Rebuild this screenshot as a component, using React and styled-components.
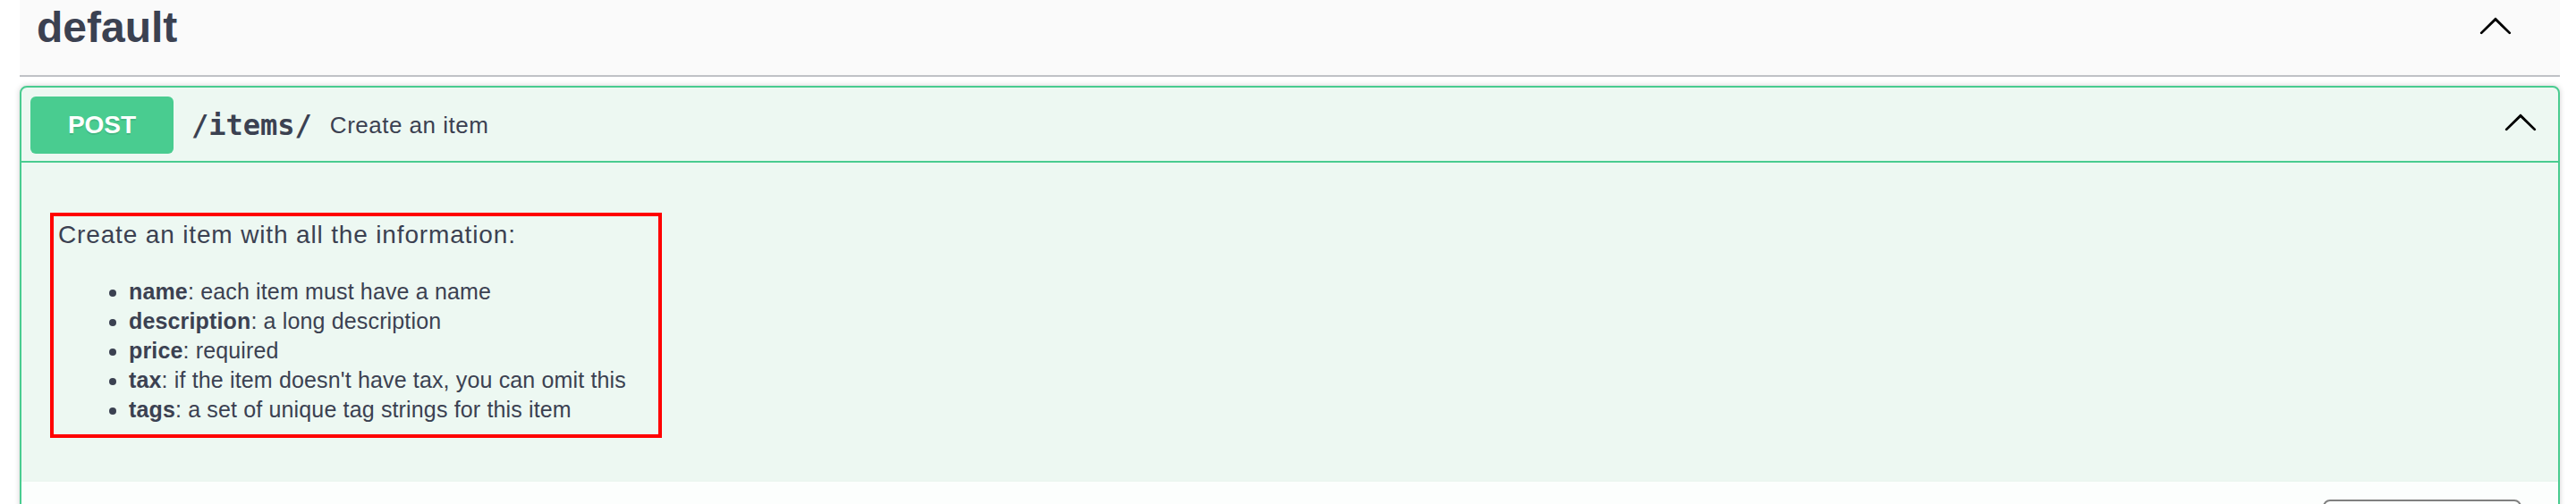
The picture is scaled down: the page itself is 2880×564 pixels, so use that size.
import React from "react";
import styled, { createGlobalStyle } from "styled-components";

const GlobalStyle = createGlobalStyle`
  html, body { margin: 0; padding: 0; background: #ffffff; }
  body { font-family: "Liberation Sans", Arial, sans-serif; color: #3b4151; }
  * { box-sizing: border-box; }
`;

const Page = styled.div`
  padding: 0 18px 0 22px;
`;

const TagHeading = styled.h3`
  display: flex;
  align-items: center;
  height: 86px;
  margin: 0 0 10px;
  padding: 0 52px 22px 19px;
  background: #fafafa;
  border-bottom: 2px solid rgba(59, 65, 81, 0.3);
  font-family: "Liberation Sans", Arial, sans-serif;
  font-size: 48px;
  font-weight: 700;
  line-height: 48px;
  color: #3b4151;
`;

const TagName = styled.span`
  flex: 1;
`;

const ArrowButton = styled.button`
  display: flex;
  align-items: center;
  justify-content: center;
  padding: 0;
  margin: ${(p) => p.$margin || "0"};
  border: none;
  background: transparent;
  cursor: pointer;
  svg { display: block; fill: #000; }
`;

const OpBlock = styled.div`
  border: 2px solid #49cc90;
  border-radius: 8px;
  background: #edf8f2;
  box-shadow: 0 0 6px rgba(0, 0, 0, 0.19);
  overflow: hidden;
  margin-bottom: 30px;
`;

const Summary = styled.div`
  display: flex;
  align-items: center;
  padding: 10px 10px 8px 10px;
  border-bottom: 2px solid #49cc90;
`;

const Method = styled.span`
  min-width: 160px;
  padding: 12px 0;
  border-radius: 6px;
  background: #49cc90;
  color: #fff;
  font-family: "Liberation Sans", Arial, sans-serif;
  font-size: 28px;
  font-weight: 700;
  line-height: 40px;
  text-align: center;
  text-shadow: 0 2px 0 rgba(0, 0, 0, 0.1);
`;

const Path = styled.span`
  padding: 0 20px;
  font-family: "DejaVu Sans Mono", "Liberation Mono", monospace;
  font-size: 32px;
  font-weight: 700;
  color: #3b4151;
`;

const SummaryDesc = styled.span`
  flex: 1;
  font-family: "Liberation Sans", Arial, sans-serif;
  font-size: 26px;
  letter-spacing: 0.5px;
  color: #3b4151;
`;

const Body = styled.div``;

const DescWrapper = styled.div`
  padding: 56px 40px 49px 32px;
`;

const Annotated = styled.div`
  width: 684px;
  border: 4px solid #ff0000;
  padding: 3px 6px 11px 5px;
`;

const Para = styled.p`
  margin: 0;
  font-size: 28px;
  line-height: 36px;
  letter-spacing: 0.85px;
  color: #3b4151;
`;

const List = styled.ul`
  margin: 29px 0 0;
  padding-left: 79px;
  list-style: disc;
`;

const Item = styled.li`
  font-size: 25px;
  line-height: 33px;
  letter-spacing: 0.15px;
  color: #3b4151;
  b { font-weight: 700; }
`;

const SectionHeader = styled.div`
  display: flex;
  align-items: flex-start;
  justify-content: flex-end;
  min-height: 100px;
  padding: 20px 41px 16px;
  background: rgba(255, 255, 255, 0.8);
  box-shadow: 0 2px 4px rgba(0, 0, 0, 0.1);
`;

const TryButton = styled.button`
  padding: 10px 50px;
  border: 2px solid #808080;
  border-radius: 8px;
  background: transparent;
  font-family: "Liberation Sans", Arial, sans-serif;
  font-size: 28px;
  font-weight: 700;
  line-height: 32px;
  color: #3b4151;
`;

const ArrowUp = () => (
  <svg width="40" height="40" viewBox="0 0 20 20" aria-hidden="true">
    <path d="M 17.418 14.908 C 17.69 15.176 18.127 15.176 18.397 14.908 C 18.667 14.64 18.668 14.207 18.397 13.939 L 10.489 6.109 C 10.219 5.841 9.782 5.841 9.51 6.109 L 1.602 13.939 C 1.332 14.207 1.332 14.64 1.602 14.908 C 1.873 15.176 2.311 15.176 2.581 14.908 L 10 7.767 L 17.418 14.908 Z" />
  </svg>
);

const fields = [
  ["name", "each item must have a name"],
  ["description", "a long description"],
  ["price", "required"],
  ["tax", "if the item doesn't have tax, you can omit this"],
  ["tags", "a set of unique tag strings for this item"],
];

export default function App() {
  return (
    <>
      <GlobalStyle />
      <Page>
        <TagHeading>
          <TagName>default</TagName>
          <ArrowButton $margin="0 0 6px 0">
            <ArrowUp />
          </ArrowButton>
        </TagHeading>
        <OpBlock>
          <Summary>
            <Method>POST</Method>
            <Path>/items/</Path>
            <SummaryDesc>Create an item</SummaryDesc>
            <ArrowButton $margin="0 12px 8px 0">
              <ArrowUp />
            </ArrowButton>
          </Summary>
          <Body>
            <DescWrapper>
              <Annotated>
                <Para>Create an item with all the information:</Para>
                <List>
                  {fields.map(([k, v]) => (
                    <Item key={k}>
                      <b>{k}</b>: {v}
                    </Item>
                  ))}
                </List>
              </Annotated>
            </DescWrapper>
            <SectionHeader>
              <TryButton>Try it out</TryButton>
            </SectionHeader>
          </Body>
        </OpBlock>
      </Page>
    </>
  );
}
